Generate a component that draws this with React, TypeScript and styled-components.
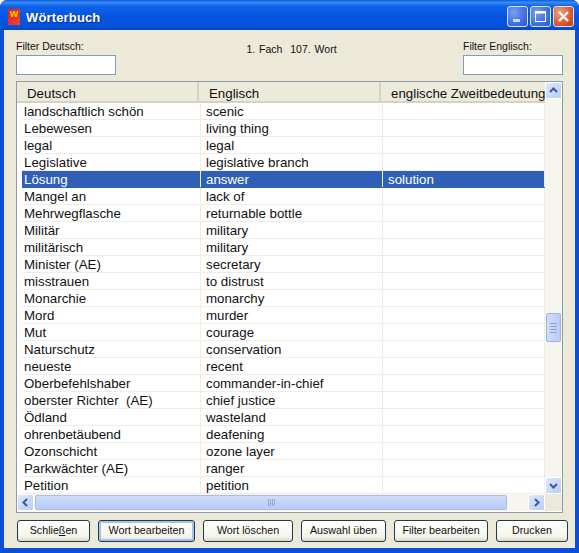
import React from "react";
import styled, { createGlobalStyle } from "styled-components";

const GlobalStyle = createGlobalStyle`
    html, body {
        margin: 0;
        padding: 0;
        background: #ffffff;
    }
    * {
        box-sizing: border-box;
    }
`;

const Window = styled.div`
    width: 579px;
    height: 553px;
    display: flex;
    flex-direction: column;
    overflow: hidden;
    border-radius: 7px 7px 0 0;
    background: #0b4fd8;
    font-family: "Liberation Sans", Arial, sans-serif;
    color: #111111;
`;

const TitleBar = styled.div`
    height: 30px;
    flex: none;
    display: flex;
    align-items: center;
    padding: 3px 5px 0 8px;
    background: linear-gradient(180deg, #0a5be0 0%, #3a8bf5 8%, #0f63e8 20%, #0555e0 55%, #0453dc 85%, #0349c0 100%);
`;

const AppIcon = styled.div`
    width: 12px;
    height: 16px;
    display: flex;
    align-items: flex-start;
    justify-content: center;
    margin-right: 6px;
    background: linear-gradient(135deg, #f01818, #e83030 60%, #f05020);
    color: #ffd800;
    font-size: 9px;
    font-weight: 700;
    line-height: 11px;
`;

const Title = styled.div`
    flex: 1;
    padding-top: 1px;
    color: #ffffff;
    font-size: 13px;
    font-weight: 700;
    letter-spacing: 0.15px;
    text-shadow: 1px 1px 1px #0a2f90;
`;

const WindowButtons = styled.div`
    display: flex;
    gap: 2px;
`;

const WindowButton = styled.div<{ $close?: boolean }>`
    width: 21px;
    height: 21px;
    display: flex;
    align-items: center;
    justify-content: center;
    border: 1px solid #d8e4fa;
    border-radius: 3px;
    background: ${(props) =>
        props.$close
            ? "radial-gradient(circle at 30% 30%, #f0a080, #d85a30 60%, #c03810)"
            : "radial-gradient(circle at 30% 30%, #7a9ef0, #3f6fe0 60%, #2a58d0)"};
`;

const Client = styled.div`
    flex: 1;
    margin: 0 4px 5px;
    padding: 8px 12px 0;
    display: flex;
    flex-direction: column;
    background: #ece9d8;
`;

const FilterRow = styled.div`
    height: 43px;
    flex: none;
    display: flex;
    justify-content: space-between;
`;

const FilterGroup = styled.div`
    width: 100px;
    display: flex;
    flex-direction: column;
`;

const FilterLabel = styled.label`
    height: 17px;
    font-size: 10.5px;
    line-height: 17px;
`;

const FilterInput = styled.input`
    width: 100px;
    height: 20px;
    padding: 0 3px;
    border: 1px solid #7f9db9;
    background: #ffffff;
    outline: none;
`;

const Counter = styled.div`
    padding: 4px 0 0 4px;
    font-size: 10.5px;
    line-height: 14px;
    word-spacing: 1px;
`;

const ListBox = styled.div`
    width: 547px;
    height: 432px;
    flex: none;
    display: grid;
    grid-template-columns: 528px 17px;
    grid-template-rows: 412px 17px;
    padding: 0 0 1px;
    border: 1px solid #8f9ca8;
    background: #ffffff;
`;

const Table = styled.div`
    overflow: hidden;
    display: flex;
    flex-direction: column;
`;

const HeaderRow = styled.div`
    height: 21px;
    flex: none;
    display: grid;
    grid-template-columns: 182px 182px 164px;
    background: #ebeadb;
    border-bottom: 2px solid #d6d2c2;
`;

const HeaderCell = styled.div<{ $last?: boolean }>`
    padding-left: 10px;
    font-size: 13.3px;
    line-height: 23px;
    white-space: nowrap;
    overflow: hidden;
    border-right: ${(props) => (props.$last ? "none" : "2px solid #d6d2c2")};
`;

const Row = styled.div<{ $selected?: boolean }>`
    height: 17px;
    flex: none;
    margin-left: 5px;
    display: grid;
    grid-template-columns: 179px 182px 162px;
    background: ${(props) => (props.$selected ? "#2f5fb6" : "#ffffff")};
    color: ${(props) => (props.$selected ? "#ffffff" : "#111111")};
    border-bottom: 1px solid ${(props) => (props.$selected ? "#2f5fb6" : "#f0eee4")};
`;

const Cell = styled.div`
    padding-left: 5px;
    font-size: 13.3px;
    line-height: 18px;
    white-space: pre;
    overflow: hidden;
    border-right: 1px solid #f0eee4;

    &:first-child {
        padding-left: 2px;
    }
`;

const VerticalBar = styled.div`
    display: flex;
    flex-direction: column;
    background: #f6f5ee;
`;

const HorizontalBar = styled.div`
    display: flex;
    background: #f6f5ee;
`;

const ScrollButton = styled.div`
    width: 17px;
    height: 17px;
    flex: none;
    display: flex;
    align-items: center;
    justify-content: center;
    border: 1px solid #ffffff;
    border-radius: 2px;
    background: linear-gradient(135deg, #dfe8fc, #b8cdf8);
`;

const VerticalThumb = styled.div`
    width: 15px;
    height: 29px;
    margin: 214px 1px 0;
    flex: none;
    display: flex;
    flex-direction: column;
    align-items: center;
    justify-content: center;
    gap: 2px;
    border: 1px solid #9fb4e0;
    border-radius: 2px;
    background: linear-gradient(90deg, #cfdcfa, #bccdf6);
`;

const VerticalTrack = styled.div`
    flex: 1;
    display: flex;
    flex-direction: column;
`;

const HorizontalThumb = styled.div`
    width: 472px;
    height: 15px;
    margin: 1px 0 0 1px;
    flex: none;
    display: flex;
    align-items: center;
    justify-content: center;
    gap: 1px;
    border: 1px solid #a8bce6;
    border-radius: 2px;
    background: linear-gradient(180deg, #cfdcfa, #b8cbf6);
`;

const HorizontalSpacer = styled.div`
    flex: 1;
`;

const GripH = styled.span`
    width: 7px;
    height: 1px;
    background: #8ea6dc;
`;

const GripV = styled.span`
    width: 1px;
    height: 7px;
    background: #8ea6dc;
`;

const Corner = styled.div`
    background: #ece9d8;
`;

const ButtonRow = styled.div`
    margin-top: 7px;
    padding-left: 1px;
    display: flex;
    gap: 8px;
`;

const ActionButton = styled.button<{ $width: number; $default?: boolean }>`
    width: ${(props) => props.$width}px;
    height: 22px;
    flex: none;
    padding: 0 0 2px;
    border: 1px solid #1c3a50;
    border-radius: 3px;
    background: linear-gradient(180deg, #ffffff, #f4f3ea 80%, #dcd8c8);
    box-shadow: ${(props) =>
        props.$default ? "inset 0 0 0 2px #a8c0ec" : "none"};
    font-family: inherit;
    font-size: 10.7px;
    color: #111111;
`;

const Underline = styled.span`
    text-decoration: underline;
`;

const rows: [string, string, string?][] = [
    ["landschaftlich schön", "scenic"],
    ["Lebewesen", "living thing"],
    ["legal", "legal"],
    ["Legislative", "legislative branch"],
    ["Lösung", "answer", "solution"],
    ["Mangel an", "lack of"],
    ["Mehrwegflasche", "returnable bottle"],
    ["Militär", "military"],
    ["militärisch", "military"],
    ["Minister (AE)", "secretary"],
    ["misstrauen", "to distrust"],
    ["Monarchie", "monarchy"],
    ["Mord", "murder"],
    ["Mut", "courage"],
    ["Naturschutz", "conservation"],
    ["neueste", "recent"],
    ["Oberbefehlshaber", "commander-in-chief"],
    ["oberster Richter  (AE)", "chief justice"],
    ["Ödland", "wasteland"],
    ["ohrenbetäubend", "deafening"],
    ["Ozonschicht", "ozone layer"],
    ["Parkwächter (AE)", "ranger"],
    ["Petition", "petition"],
];

const Chevron = ({ d }: { d: string }) => (
    <svg width="9" height="9" viewBox="0 0 9 9" fill="none">
        <path d={d} stroke="#3a5a98" strokeWidth="2" />
    </svg>
);

const App = () => {
    return (
        <>
            <GlobalStyle />
            <Window>
                <TitleBar>
                    <AppIcon>W</AppIcon>
                    <Title>Wörterbuch</Title>
                    <WindowButtons>
                        <WindowButton>
                            <svg width="13" height="13" viewBox="0 0 13 13">
                                <rect x="2" y="9" width="7" height="3" fill="#c8d8f8" />
                            </svg>
                        </WindowButton>
                        <WindowButton>
                            <svg width="13" height="13" viewBox="0 0 13 13" fill="none">
                                <rect x="1.5" y="1.5" width="10" height="10" stroke="#ffffff" />
                                <rect x="1" y="1" width="11" height="2.5" fill="#ffffff" />
                            </svg>
                        </WindowButton>
                        <WindowButton $close>
                            <svg width="13" height="13" viewBox="0 0 13 13" fill="none">
                                <path d="M2 2l9 9M11 2l-9 9" stroke="#ffffff" strokeWidth="2.2" />
                            </svg>
                        </WindowButton>
                    </WindowButtons>
                </TitleBar>
                <Client>
                    <FilterRow>
                        <FilterGroup>
                            <FilterLabel>Filter Deutsch:</FilterLabel>
                            <FilterInput />
                        </FilterGroup>
                        <Counter>1. Fach&nbsp; 107. Wort</Counter>
                        <FilterGroup>
                            <FilterLabel>Filter Englisch:</FilterLabel>
                            <FilterInput />
                        </FilterGroup>
                    </FilterRow>
                    <ListBox>
                        <Table>
                            <HeaderRow>
                                <HeaderCell>Deutsch</HeaderCell>
                                <HeaderCell>Englisch</HeaderCell>
                                <HeaderCell $last>englische Zweitbedeutung</HeaderCell>
                            </HeaderRow>
                            {rows.map(([de, en, second]) => (
                                <Row key={de} $selected={de === "Lösung"}>
                                    <Cell>{de}</Cell>
                                    <Cell>{en}</Cell>
                                    <Cell>{second}</Cell>
                                </Row>
                            ))}
                        </Table>
                        <VerticalBar>
                            <ScrollButton>
                                <Chevron d="M1 6l3.5-3.5L8 6" />
                            </ScrollButton>
                            <VerticalTrack>
                                <VerticalThumb>
                                    <GripH />
                                    <GripH />
                                    <GripH />
                                    <GripH />
                                </VerticalThumb>
                            </VerticalTrack>
                            <ScrollButton>
                                <Chevron d="M1 3l3.5 3.5L8 3" />
                            </ScrollButton>
                        </VerticalBar>
                        <HorizontalBar>
                            <ScrollButton>
                                <Chevron d="M6 1L2.5 4.5 6 8" />
                            </ScrollButton>
                            <HorizontalThumb>
                                <GripV />
                                <GripV />
                                <GripV />
                                <GripV />
                            </HorizontalThumb>
                            <HorizontalSpacer />
                            <ScrollButton>
                                <Chevron d="M3 1l3.5 3.5L3 8" />
                            </ScrollButton>
                        </HorizontalBar>
                        <Corner />
                    </ListBox>
                    <ButtonRow>
                        <ActionButton $width={73}>
                            Schlie<Underline>ß</Underline>en
                        </ActionButton>
                        <ActionButton $width={97} $default>
                            Wort bearbeiten
                        </ActionButton>
                        <ActionButton $width={90}>Wort löschen</ActionButton>
                        <ActionButton $width={85}>Auswahl üben</ActionButton>
                        <ActionButton $width={94}>Filter bearbeiten</ActionButton>
                        <ActionButton $width={72}>Drucken</ActionButton>
                    </ButtonRow>
                </Client>
            </Window>
        </>
    );
};

export default App;
